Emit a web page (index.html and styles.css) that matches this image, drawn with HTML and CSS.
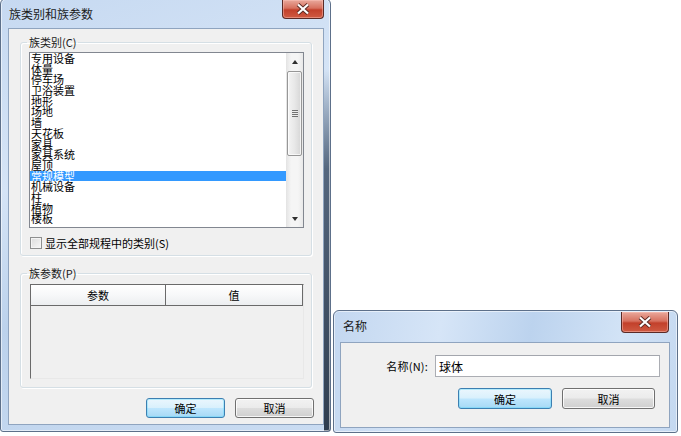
FILE: index.html
```html
<!DOCTYPE html>
<html lang="zh-CN">
  <head>
    <meta charset="UTF-8" />
    <title>族类别和族参数</title>
    <link rel="stylesheet" href="styles.css">
  </head>
  <body>
    <div class="desk">
      <section class="win win-family">
        <header class="titlebar">
          <span class="title">族类别和族参数</span>
          <button class="close" aria-label="关闭">
            <svg viewBox="0 0 14 12" width="14" height="12">
              <path d="M2 1.5 L12 10.5 M12 1.5 L2 10.5" class="x-shadow" />
              <path d="M2 1.5 L12 10.5 M12 1.5 L2 10.5" class="x-mark" />
            </svg>
          </button>
        </header>
        <div class="client">
          <fieldset class="group group-cat">
            <legend>族类别(C)</legend>
            <div class="listbox">
              <ul class="items">
                <li>专用设备</li>
                <li>体量</li>
                <li>停车场</li>
                <li>卫浴装置</li>
                <li>地形</li>
                <li>场地</li>
                <li>墙</li>
                <li>天花板</li>
                <li>家具</li>
                <li>家具系统</li>
                <li>屋顶</li>
                <li class="selected">常规模型</li>
                <li>机械设备</li>
                <li>柱</li>
                <li>植物</li>
                <li>楼板</li>
              </ul>
              <div class="vscroll">
                <span class="arrow up"></span>
                <span class="track">
                  <span class="thumb"><i class="grip"></i></span>
                </span>
                <span class="arrow down"></span>
              </div>
            </div>
            <label class="check"><span class="box"></span>显示全部规程中的类别(S)</label>
          </fieldset>
          <fieldset class="group group-param">
            <legend>族参数(P)</legend>
            <div class="grid">
              <div class="grid-head">
                <span class="col col-name">参数</span>
                <span class="col col-value">值</span>
              </div>
              <div class="grid-body"></div>
            </div>
          </fieldset>
          <div class="actions actions-family">
            <button class="btn btn-default btn-family">确定</button>
            <button class="btn btn-family">取消</button>
          </div>
        </div>
      </section>

      <section class="win win-name">
        <header class="titlebar">
          <span class="title">名称</span>
          <button class="close close-wide" aria-label="关闭">
            <svg viewBox="0 0 14 12" width="14" height="12">
              <path d="M2 1.5 L12 10.5 M12 1.5 L2 10.5" class="x-shadow" />
              <path d="M2 1.5 L12 10.5 M12 1.5 L2 10.5" class="x-mark" />
            </svg>
          </button>
        </header>
        <div class="client client-name">
          <div class="field-row">
            <label class="field-label" for="name">名称(N):</label>
            <input id="name" class="field-input" type="text" value="球体" />
          </div>
          <div class="actions actions-name">
            <button class="btn btn-default btn-name">确定</button>
            <button class="btn btn-name btn-cancel">取消</button>
          </div>
        </div>
      </section>
    </div>
  </body>
</html>
```

FILE: styles.css
```css
* {
  box-sizing: border-box;
}
body {
  margin: 0;
  background: #ffffff;
  font-family: "Noto Sans CJK SC", "DejaVu Sans", sans-serif;
  font-size: 11px;
  color: #000;
  overflow: hidden;
}
.desk {
  display: flex;
  align-items: flex-start;
  width: 681px;
  height: 436px;
}

/* window frames */
.win {
  display: flex;
  flex-direction: column;
  border: 1px solid #5d708a;
  border-radius: 6px 6px 3px 3px;
  background:
    linear-gradient(to bottom, rgba(70, 86, 108, 0) 70px, #55677e 170px, #2f3d4f 100%) right / 6px 100% no-repeat,
    linear-gradient(160deg, #c6d9f1 0%, #d5e4f6 35%, #bcd2ec 60%, #cadcf2 100%);
  box-shadow: inset 0 0 0 1px rgba(255, 255, 255, 0.55);
}
.win-family {
  width: 331px;
  margin-top: -2px;
  padding: 0 6px 6px 7px;
}
.win-name {
  width: 345px;
  margin-top: 310px;
  margin-left: 2px;
  padding: 0 7px 4px 6px;
  background: linear-gradient(100deg, #c3d7f0 0%, #d6e5f7 30%, #bcd3ee 55%, #d2e3f6 80%, #c4d8f0 100%);
}
.titlebar {
  display: flex;
  justify-content: space-between;
  align-items: flex-start;
  height: 29px;
}
.win-name .titlebar {
  height: 31px;
}
.title {
  padding: 7px 0 0 1px;
  font-size: 12px;
  line-height: 16px;
  color: #1b1b1b;
}
.win-name .title {
  padding-left: 3px;
}
.close {
  display: flex;
  align-items: center;
  justify-content: center;
  width: 42px;
  height: 19px;
  margin-top: 1px;
  padding: 0;
  border: 1px solid #5a2a26;
  border-top: none;
  border-radius: 0 0 4px 4px;
  background: linear-gradient(#e9a99c 0%, #d7715f 45%, #c2402b 55%, #cf5a42 100%);
  box-shadow: inset 0 0 0 1px rgba(255, 200, 190, 0.45);
}
.close-wide {
  width: 48px;
  height: 21px;
  margin-right: 1px;
}
.x-shadow {
  stroke: #5b2a24;
  stroke-width: 4;
  fill: none;
}
.x-mark {
  stroke: #ffffff;
  stroke-width: 2.2;
  fill: none;
}

.client {
  display: flex;
  flex-direction: column;
  border: 1px solid #8fa4bf;
  background: #f0f0f0;
  padding: 6px 11px 6px;
}

/* group boxes */
.group {
  margin: 0;
  padding: 0 7px 5px 8px;
  border: 1px solid #d5dfe5;
  border-radius: 3px;
  box-shadow: inset 1px 1px 0 #ffffff, 1px 1px 0 #ffffff;
}
.group legend {
  padding: 0 2px;
  margin-left: -2px;
  font-size: 11px;
  line-height: 14px;
  color: #1a1a1a;
}
.group-param {
  margin-top: 10px;
  padding-bottom: 8px;
}

/* list box */
.listbox {
  display: flex;
  height: 176px;
  margin-top: 3px;
  border: 1px solid #828790;
  background: #ffffff;
}
.items {
  flex: 1;
  margin: 0;
  padding: 0;
  list-style: none;
  overflow: hidden;
}
.items li {
  padding-left: 1px;
  height: 10.7px;
  line-height: 10.7px;
  font-size: 11px;
  white-space: nowrap;
}
.items li.selected {
  background: #3399ff;
  color: #ffffff;
}
.vscroll {
  display: flex;
  flex-direction: column;
  width: 17px;
  background: linear-gradient(to right, #e3e3e3, #f5f5f5 30%, #f5f5f5 70%, #e9e9e9);
}
.arrow {
  display: flex;
  align-items: center;
  justify-content: center;
  height: 17px;
}
.arrow::before {
  content: "";
  border-left: 3.5px solid transparent;
  border-right: 3.5px solid transparent;
}
.arrow.up::before {
  border-bottom: 4px solid #303030;
}
.arrow.down::before {
  border-top: 4px solid #303030;
}
.track {
  flex: 1;
  display: flex;
  flex-direction: column;
}
.thumb {
  display: flex;
  align-items: center;
  justify-content: center;
  height: 85px;
  margin: 1px 1px 0;
  border: 1px solid #979797;
  border-radius: 2px;
  background: linear-gradient(to right, #f4f4f4, #e8e8e8 50%, #d6d6d6);
  box-shadow: inset 0 0 0 1px rgba(255, 255, 255, 0.7);
}
.grip {
  width: 6px;
  height: 7px;
  background: repeating-linear-gradient(#555 0, #555 1px, #eee 1px, #eee 2px);
  opacity: 0.8;
}

/* checkbox */
.check {
  display: flex;
  align-items: center;
  gap: 3px;
  height: 14px;
  margin-top: 8px;
  padding-left: 1px;
  font-size: 11px;
  line-height: 14px;
}
.box {
  width: 12px;
  height: 12px;
  border: 1px solid #8e8f8f;
  background: linear-gradient(135deg, #dcdcdc, #f7f7f7);
  box-shadow: inset 0 0 0 1px #f4f4f4;
}

/* parameter grid */
.grid {
  display: flex;
  flex-direction: column;
  height: 95px;
  margin: 4px 0 0 1px;
  width: 274px;
  border-left: 1px solid #6a6a6a;
  border-top: 1px solid #6a6a6a;
  border-right: 1px solid #e8e8e8;
  border-bottom: 1px solid #e8e8e8;
}
.grid-head {
  display: flex;
  height: 21px;
  border-right: 1px solid #6a6a6a;
  border-bottom: 1px solid #6a6a6a;
  background: linear-gradient(#ffffff, #f7f8f9 50%, #eceef0);
}
.col {
  display: flex;
  align-items: center;
  justify-content: center;
  font-size: 11px;
}
.col-name {
  width: 135px;
  border-right: 1px solid #6a6a6a;
}
.col-value {
  flex: 1;
}
.grid-body {
  flex: 1;
  background: #f0f0f0;
}

/* buttons */
.actions {
  display: flex;
  justify-content: flex-end;
  gap: 10px;
  margin-top: 10px;
}
.actions-family {
  margin-right: -2px;
}
.btn {
  height: 20px;
  padding: 0;
  border: 1px solid #707070;
  border-radius: 3px;
  background: linear-gradient(#f2f2f2 0%, #ebebeb 48%, #dddddd 52%, #cfcfcf 100%);
  box-shadow: inset 0 0 0 1px rgba(255, 255, 255, 0.8);
  font-family: "Noto Sans CJK SC", "DejaVu Sans", sans-serif;
  font-size: 11px;
  color: #000;
}
.btn-default {
  border-color: #3c7fb1;
  background: linear-gradient(#eaf6fd 0%, #d9f0fc 48%, #bee6fd 52%, #a7d9f5 100%);
  box-shadow: inset 0 0 0 1px #48d5fb55;
}
.btn-family {
  width: 79px;
}
.btn-name {
  width: 94px;
  height: 21px;
}
.btn-cancel {
  width: 93px;
}

/* name dialog */
.client-name {
  padding: 12px 14px 18px 0;
  height: 86px;
}
.field-row {
  display: flex;
  align-items: center;
  gap: 7px;
}
.field-label {
  width: 87px;
  text-align: right;
  font-size: 11px;
  letter-spacing: 0.2px;
}
.field-input {
  width: 225px;
  height: 22px;
  margin-right: -5px;
  padding: 0 3px;
  border: 1px solid #abadb3;
  border-top-color: #a3a6ad;
  background: #ffffff;
  font-family: "Noto Sans CJK SC", "DejaVu Sans", sans-serif;
  font-size: 12px;
  color: #000;
}
.actions-name {
  margin-top: 11px;
}
```
